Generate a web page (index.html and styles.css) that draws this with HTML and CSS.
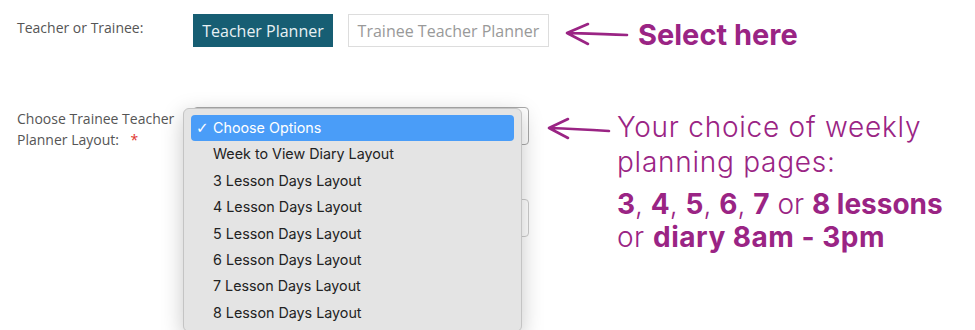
FILE: index.html
```html
<!DOCTYPE html>
<html lang="en">
<head>
  <meta charset="UTF-8">
  <title>Trainee Teacher Planner Options</title>
  <link rel="stylesheet" href="styles.css">
</head>
<body>

  <div class="form">

    <div class="row row-type">
      <div class="label">Teacher or Trainee:</div>
      <div class="choices">
        <button class="choice choice-on">Teacher Planner</button>
        <button class="choice">Trainee Teacher Planner</button>
      </div>
      <div class="note note-top">
        <svg class="arrow" width="64" height="24" viewBox="0 0 64 24">
          <path d="M2 11 C20 11.5 40 12 62 13 M2 11 L23 2 M2 11 L23 22" />
        </svg>
        <span class="select-here">Select here</span>
      </div>
    </div>

    <div class="row row-layout">
      <div class="label">Choose Trainee Teacher<br>Planner Layout: <span class="req">*</span></div>
      <div class="fields">
        <div class="select"></div>
        <div class="select select-next"></div>

        <ul class="menu">
          <li class="picked">Choose Options</li>
          <li>Week to View Diary Layout</li>
          <li>3 Lesson Days Layout</li>
          <li>4 Lesson Days Layout</li>
          <li>5 Lesson Days Layout</li>
          <li>6 Lesson Days Layout</li>
          <li>7 Lesson Days Layout</li>
          <li>8 Lesson Days Layout</li>
        </ul>
      </div>
      <div class="note note-layout">
        <svg class="arrow" width="64" height="24" viewBox="0 0 64 24">
          <path d="M2 11 C20 11.5 40 12.5 62 14 M2 11 L21 2 M2 11 L21 21" />
        </svg>
        <div class="blurb">
          <p class="choice-of">Your choice of weekly<br>planning pages:</p>
          <p class="lessons"><b>3</b>, <b>4</b>, <b>5</b>, <b>6</b>, <b>7</b> or <b>8 lessons</b><br><span class="diary">or <b>diary 8am - 3pm</b></span></p>
        </div>
      </div>
    </div>

  </div>

</body>
</html>
```

FILE: styles.css
```css
body {
  margin: 0;
  min-height: 330px;
  background: #fff;
  font-family: 'Open Sans', sans-serif;
  color: #555;
}
.form {
  padding: 14px 0 0 17px;
}
.row {
  display: flex;
  align-items: flex-start;
}
.label {
  width: 176px;
  flex: none;
  font-size: 14px;
  line-height: 21px;
  padding-top: 1px;
}
.row-type .label {
  padding-top: 3px;
}
.req {
  color: #e0342b;
  margin-left: 8px;
}
.choices {
  display: flex;
  gap: 15px;
}
.choice {
  height: 33px;
  padding: 0 8px;
  border: 1px solid #ddd;
  background: #fff;
  color: #999;
  font-family: 'Open Sans', sans-serif;
  font-size: 16px;
  font-weight: 400;
}
.choice-on {
  width: 140px;
  background: #175e73;
  border-color: #175e73;
  color: #e8f1f4;
}
.choice:not(.choice-on) {
  width: 201px;
}
.note {
  display: flex;
  align-items: flex-start;
  color: #9a2484;
  font-family: Inter, 'Noto Sans', sans-serif;
}
.arrow path {
  fill: none;
  stroke: #9a2484;
  stroke-width: 2.6;
  stroke-linecap: round;
  stroke-linejoin: round;
}
.note-top {
  margin-left: 16px;
  padding-top: 8px;
}
.select-here {
  margin-left: 9px;
  margin-top: -4px;
  font-size: 29px;
  font-weight: 700;
  line-height: 34px;
}
.row-layout {
  margin-top: 55px;
}
.fields {
  position: relative;
  width: 336px;
  flex: none;
}
.select {
  height: 36px;
  border: 1px solid #aaa;
  border-radius: 4px;
}
.select-next {
  margin-top: 54px;
  border-color: #ccc;
}
.menu {
  position: absolute;
  left: -10px;
  top: 1px;
  width: 337px;
  height: 216px;
  margin: 0;
  padding: 6px 0 0;
  list-style: none;
  background: #e4e4e4;
  border: 1px solid #c4c4c4;
  border-radius: 6px;
  box-shadow: 0 6px 22px rgba(0, 0, 0, 0.22);
  font-family: Inter, 'Noto Sans', sans-serif;
  font-size: 14.3px;
  color: #222;
}
.menu li {
  position: relative;
  height: 26.4px;
  line-height: 26.4px;
  margin: 0 7px;
  padding-left: 22px;
  border-radius: 4px;
}
.menu .picked {
  background: #4a9df8;
  color: #fff;
}
.picked::before {
  content: "\2713";
  position: absolute;
  left: 5px;
  font-family: 'DejaVu Sans', sans-serif;
  font-size: 15px;
  font-weight: 700;
}
.note-layout {
  margin-left: 18px;
}
.note-layout .arrow {
  margin-top: 10px;
}
.blurb {
  margin-left: 6px;
  padding-top: 3px;
  font-size: 28px;
  font-weight: 300;
}
.blurb p {
  margin: 0;
  line-height: 35px;
}
.blurb .choice-of {
  letter-spacing: 0.75px;
}
.blurb .lessons {
  margin-top: 8px;
  line-height: 33px;
}
.diary {
  letter-spacing: 0.5px;
}
.blurb b {
  font-weight: 700;
}
```
